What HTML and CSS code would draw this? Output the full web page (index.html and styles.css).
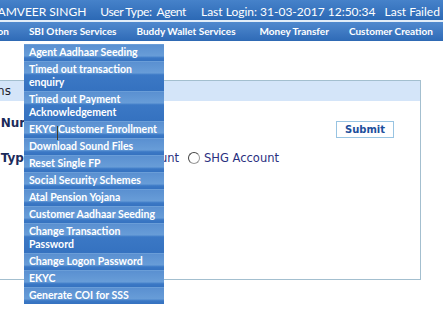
FILE: index.html
```html
<!DOCTYPE html>
<html lang="en">
<head>
    <meta charset="UTF-8">
    <meta name="viewport" content="width=device-width, initial-scale=1.0">
    <title>Agent Services</title>
    <link rel="stylesheet" href="styles.css">
</head>
<body>

<!-- User information bar -->
<div class="user-bar">
    <span class="user-name">RAMVEER SINGH</span>
    <span class="user-type">User Type:&nbsp; Agent</span>
    <span class="last-login">Last Login: 31-03-2017 12:50:34</span>
    <span class="last-failed">Last Failed Login: 30-03-2017 18:02:11</span>
</div>

<!-- Main menu -->
<ul class="main-menu">
    <li class="first">Registration</li>
    <li>SBI Others Services
        <ul class="sub-menu">
            <li>Agent Aadhaar Seeding</li>
            <li>Timed out transaction enquiry</li>
            <li>Timed out Payment Acknowledgement</li>
            <li>EKYC Customer Enrollment</li>
            <li>Download Sound Files</li>
            <li>Reset Single FP</li>
            <li>Social Security Schemes</li>
            <li>Atal Pension Yojana</li>
            <li>Customer Aadhaar Seeding</li>
            <li>Change Transaction Password</li>
            <li>Change Logon Password</li>
            <li>EKYC</li>
            <li>Generate COI for SSS</li>
        </ul>
    </li>
    <li>Buddy Wallet Services</li>
    <li class="money">Money Transfer</li>
    <li>Customer Creation</li>
    <li>Reports</li>
</ul>

<!-- Search panel -->
<div class="panel">
    <div class="panel-title">Transactions</div>
    <div class="panel-body">
        <div class="form-row">
            <label class="field-label" for="account-number">Account Number</label>
            <input type="text" id="account-number" class="text-field">
            <button class="submit-button">Submit</button>
        </div>
        <div class="form-row">
            <span class="field-label">Account Type</span>
            <label class="option"><input type="radio" name="account-type">Savings Account</label>
            <label class="option"><input type="radio" name="account-type">SHG Account</label>
        </div>
    </div>
</div>

<span class="text-cursor"></span>

</body>
</html>
```

FILE: styles.css
```css
html, body {
    margin: 0;
    overflow: hidden;
}
body {
    width: 443px;
    height: 334px;
    position: relative;
    background-color: #fff;
    font-family: "DejaVu Sans", Verdana, sans-serif;
}

/* user bar */
.user-bar {
    display: flex;
    height: 22px;
    box-sizing: border-box;
    padding-top: 4px;
    line-height: 16px;
    white-space: nowrap;
    font-family: Lato, "Liberation Sans", sans-serif;
    font-size: 12px;
    color: #fff;
    background: linear-gradient(to bottom, #4682ca, #2c69b5);
    border-bottom: 2px solid #e2edf8;
}
.user-name {
    margin-left: -10px;
}
.user-type {
    margin-left: 14px;
    letter-spacing: -0.4px;
}
.last-login {
    margin-left: 15px;
}
.last-failed {
    margin-left: 9px;
}

/* main menu */
.main-menu {
    display: flex;
    list-style: none;
    margin: 0;
    padding: 0;
    height: 18px;
    white-space: nowrap;
    font-family: Lato, "Liberation Sans", sans-serif;
    font-weight: bold;
    font-size: 10px;
    color: #fff;
    background: linear-gradient(to bottom, #5089ce, #306cb8);
    border-bottom: 1px solid #2f6ab4;
}
.main-menu > li {
    position: relative;
    padding: 0 10px;
    line-height: 19px;
}
.main-menu > li.first {
    margin-left: -55px;
}
.main-menu > li.money {
    margin-left: 4px;
}

/* drop-down */
.sub-menu {
    position: absolute;
    top: 22px;
    left: 5px;
    width: 140px;
    list-style: none;
    margin: 0;
    padding: 0;
    white-space: normal;
    font-size: 10.5px;
    z-index: 5;
}
.sub-menu li {
    padding: 2px 3px 2px 5px;
    line-height: 13px;
    background: linear-gradient(to bottom, #7aabdf 0, #5a90d1 1px, #689dd8 12px, #4a85cc 13px, #3b78c5 14px, #3572c0 100%);
}

/* panel */
.panel {
    margin: 39px 0 0 -80px;
    width: 501px;
    height: 200px;
    box-sizing: border-box;
    border: 1px solid #a3bfcf;
}
.panel-title {
    height: 20px;
    line-height: 20px;
    padding-left: 15px;
    font-size: 12px;
    color: #1c1c2c;
    background-color: #d4e5f9;
}
.panel-body {
    padding: 14px 26px 0 21px;
}
.form-row {
    display: flex;
    align-items: flex-start;
    margin-bottom: 12px;
}
.field-label {
    width: 126px;
    flex-shrink: 0;
    line-height: 16px;
    font-size: 12px;
    font-weight: bold;
    color: #1b2b5b;
}
.text-field {
    width: 84px;
    height: 16px;
    margin: 0;
    padding: 0;
    border: 1px solid #9cc4e0;
}
.submit-button {
    margin: 6px 0 0 auto;
    width: 58px;
    height: 17px;
    padding: 0;
    font-family: "DejaVu Sans", Verdana, sans-serif;
    font-size: 10px;
    font-weight: bold;
    color: #1d4f9c;
    background-color: #fff;
    border: 1px solid #98c4e2;
}
.option {
    display: inline-flex;
    align-items: center;
    gap: 4px;
    margin-right: 9px;
    line-height: 16px;
    font-size: 11.5px;
    color: #2a2f80;
}
.option input {
    appearance: none;
    margin: 0;
    width: 12px;
    height: 12px;
    border-radius: 50%;
    border: 1px solid #9a9a9a;
    border-top-color: #444;
    border-left-color: #444;
    background-color: #fff;
}

/* mouse cursor */
.text-cursor {
    position: absolute;
    left: 57px;
    top: 126px;
    width: 1px;
    height: 14px;
    background-color: #4a3d24;
    z-index: 6;
}
```
